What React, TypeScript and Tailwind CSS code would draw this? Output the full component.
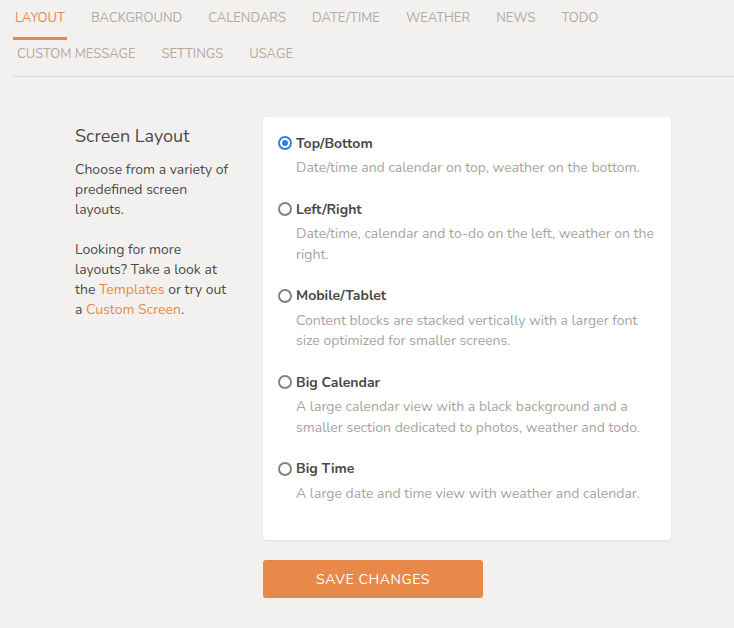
const tabs = [
  ["LAYOUT", "BACKGROUND", "CALENDARS", "DATE/TIME", "WEATHER", "NEWS", "TODO"],
  ["CUSTOM MESSAGE", "SETTINGS", "USAGE"],
];

const layouts = [
  { name: "Top/Bottom", desc: "Date/time and calendar on top, weather on the bottom.", checked: true },
  { name: "Left/Right", desc: "Date/time, calendar and to-do on the left, weather on the right." },
  { name: "Mobile/Tablet", desc: "Content blocks are stacked vertically with a larger font size optimized for smaller screens." },
  { name: "Big Calendar", desc: "A large calendar view with a black background and a smaller section dedicated to photos, weather and todo." },
  { name: "Big Time", desc: "A large date and time view with weather and calendar." },
];

function Radio({ checked }: { checked?: boolean }) {
  if (checked) {
    return (
      <span className="flex h-[14px] w-[14px] shrink-0 items-center justify-center rounded-full border-2 border-[#2f7fe8] bg-white">
        <span className="h-[6px] w-[6px] rounded-full bg-[#2f7fe8]" />
      </span>
    );
  }
  return <span className="h-[14px] w-[14px] shrink-0 rounded-full border-2 border-[#85818a] bg-white" />;
}

export default function App() {
  return (
    <main className="min-h-screen bg-[#f2f1ef] font-['Nunito','Lato',sans-serif] text-[#4d4b49]">
      <nav className="ml-[13px] border-b border-[#d9d7d4]">
        <div className="flex h-[40px] items-stretch">
          {tabs[0].map((t) => {
            const active = t === "LAYOUT";
            return (
              <div
                key={t}
                className={`mr-[22px] px-[2px] pt-[9px] text-[13px] leading-[18px] ${
                  active ? "border-b-[3px] border-[#e8894a] text-[#e8894a]" : "text-[#b3aba3]"
                }`}
              >
                {t}
              </div>
            );
          })}
        </div>
        <div className="flex h-[36px] pl-[2px]">
          {tabs[1].map((t) => (
            <div key={t} className="mr-[22px] px-[2px] pt-[5px] text-[13px] leading-[18px] text-[#b3aba3]">
              {t}
            </div>
          ))}
        </div>
      </nav>

      <div className="flex gap-[28px] pl-[75px] pt-[40px]">
        <section className="w-[160px] shrink-0">
          <h2 className="mt-[7px] text-[18px] leading-[24px] text-[#4d4b49]">Screen Layout</h2>
          <p className="mt-[12px] text-[14px] leading-[20px]">
            Choose from a variety of predefined screen layouts.
          </p>
          <p className="mt-[20px] text-[14px] leading-[20px]">
            Looking for more layouts? Take a look at the{" "}
            <span className="text-[#e8894a]">Templates</span> or try out a{" "}
            <span className="text-[#e8894a]">Custom Screen</span>.
          </p>
        </section>

        <div className="w-[408px]">
          <div className="rounded-[4px] bg-white px-[15px] pt-[16px] pb-[15px] shadow-[0_1px_2px_rgba(0,0,0,0.08)]">
            {layouts.map((l) => (
              <div key={l.name} className="mb-[21px]">
                <div className="flex h-5 items-center gap-[4px]">
                  <Radio checked={l.checked} />
                  <span className="text-[14px] font-bold text-[#4a4846]">{l.name}</span>
                </div>
                <p className="mt-[5px] pl-[18px] text-[14px] leading-[20.25px] text-[#a8a4a0]">{l.desc}</p>
              </div>
            ))}
          </div>
          <button
            type="button"
            className="mt-[20px] h-[38px] w-[220px] rounded-[3px] bg-[#e8894a] text-[14px] tracking-[0.6px] text-white"
          >
            SAVE CHANGES
          </button>
        </div>
      </div>
    </main>
  );
}
